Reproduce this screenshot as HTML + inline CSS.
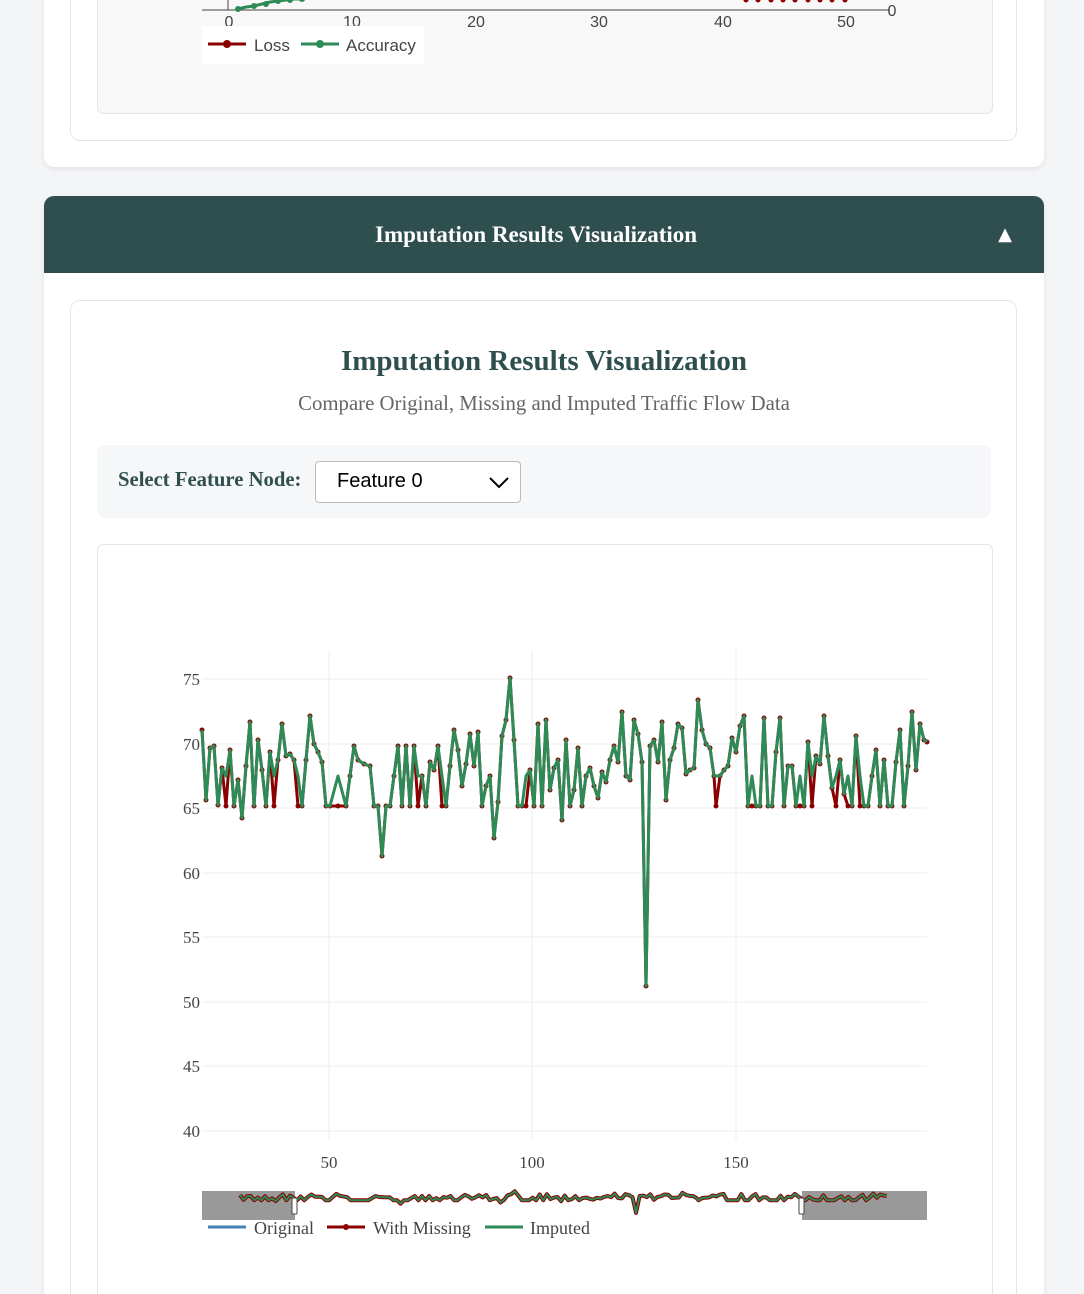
<!DOCTYPE html>
<html style="height:1294px;overflow:hidden"><head><meta charset="utf-8"><style>
*{box-sizing:border-box;margin:0;padding:0}
body{width:1084px;height:1294px;background:#f4f5f7;position:relative;overflow:hidden;font-family:"Liberation Serif",serif}
.abs{position:absolute}
.card{background:#fff;border-radius:10px;box-shadow:0 2px 6px rgba(0,0,0,.08)}
</style></head><body>
<div class="abs card" style="left:44px;top:-20px;width:1000px;height:187px"></div>
<div class="abs" style="left:70px;top:-20px;width:947px;height:161px;border:1px solid #e6e6e6;border-radius:10px;background:#fff"></div>
<div class="abs" style="left:97px;top:-20px;width:896px;height:134px;border:1px solid #e6e6e6;border-radius:6px;background:#f8f8f8"></div>
<svg class="abs" style="left:0;top:0" width="1084" height="70">
<line x1="202" y1="10" x2="885" y2="10" stroke="#444" stroke-width="1"/>
<line x1="228" y1="0" x2="228" y2="10" stroke="#444"/>
<g font-family="Liberation Sans" font-size="16" fill="#444" text-anchor="middle">
<text x="229" y="27">0</text><text x="352" y="27">10</text><text x="476" y="27">20</text><text x="599" y="27">30</text><text x="723" y="27">40</text><text x="846" y="27">50</text>
<text x="892" y="16">0</text></g>
<line x1="885" y1="10" x2="890" y2="10" stroke="#444"/>
<polyline points="238,9 246,7 254,6 262,4 270,2 278,1 286,0 294,-1 302,-1 310,-2 318,-2" fill="none" stroke="#2e8b57" stroke-width="3"/>
<g fill="#2e8b57"><circle cx="238" cy="9" r="3"/><circle cx="254" cy="6" r="3"/><circle cx="266" cy="4" r="3"/><circle cx="278" cy="1" r="3"/><circle cx="290" cy="0" r="3"/><circle cx="302" cy="-1" r="3"/></g>
<g fill="#8b0000"><circle cx="746" cy="0" r="2.5"/><circle cx="758" cy="0" r="2.5"/><circle cx="771" cy="0" r="2.5"/><circle cx="783" cy="0" r="2.5"/><circle cx="795" cy="0" r="2.5"/><circle cx="808" cy="0" r="2.5"/><circle cx="820" cy="0" r="2.5"/><circle cx="832" cy="0" r="2.5"/><circle cx="845" cy="0" r="2.5"/></g>
<rect x="202" y="26" width="222" height="38" fill="#fff"/>
<line x1="208" y1="44" x2="246" y2="44" stroke="#8b0000" stroke-width="3"/><circle cx="227" cy="44" r="4" fill="#8b0000"/>
<line x1="301" y1="44" x2="339" y2="44" stroke="#2e8b57" stroke-width="3"/><circle cx="320" cy="44" r="4" fill="#2e8b57"/>
<g font-family="Liberation Sans" font-size="17" fill="#444"><text x="254" y="51">Loss</text><text x="346" y="51">Accuracy</text></g>
</svg>

<div class="abs card" style="left:44px;top:196px;width:1000px;height:1120px;overflow:hidden">
<div style="height:77px;background:#2f4f4f;color:#fff;font-weight:bold;font-size:23px;line-height:77px;position:relative"><span style="position:absolute;left:331px;top:0">Imputation Results Visualization</span><span style="position:absolute;right:32px;top:0;font-size:18px;font-family:'DejaVu Sans'">▲</span></div>
</div>
<div class="abs" style="left:70px;top:300px;width:947px;height:1100px;border:1px solid #e6e6e6;border-radius:10px;background:#fff"></div>
<div class="abs" style="left:0;top:345px;width:1088px;text-align:center;font-size:29px;font-weight:bold;color:#2f4f4f">Imputation Results Visualization</div>
<div class="abs" style="left:0;top:392px;width:1088px;text-align:center;font-size:20.8px;color:#666">Compare Original, Missing and Imputed Traffic Flow Data</div>
<div class="abs" style="left:97px;top:445px;width:894px;height:73px;background:#f6f7f9;border-radius:8px"></div>
<div class="abs" style="left:118px;top:469px;font-size:20.7px;font-weight:bold;color:#2f4f4f">Select Feature Node:</div>
<div class="abs" style="left:315px;top:461px;width:206px;height:42px;border:1px solid #bbb;border-radius:4px;background:#fff;font-family:'Liberation Sans',sans-serif;font-size:20px;padding:8px 0 0 21px;color:#000">Feature 0
<svg style="position:absolute;right:10px;top:14px" width="22" height="14"><polyline points="2,2 11,11 20,2" fill="none" stroke="#000" stroke-width="2"/></svg></div>
<div class="abs" style="left:97px;top:544px;width:896px;height:800px;border:1px solid #e6e6e6;border-radius:6px;background:#fff"></div>
<svg id="ch" class="abs" style="left:0;top:0" width="1084" height="1294">
<g stroke="#eee" stroke-width="1">
<line x1="202" y1="679" x2="927" y2="679"/><line x1="202" y1="744" x2="927" y2="744"/><line x1="202" y1="808" x2="927" y2="808"/><line x1="202" y1="873" x2="927" y2="873"/><line x1="202" y1="937" x2="927" y2="937"/><line x1="202" y1="1002" x2="927" y2="1002"/><line x1="202" y1="1066" x2="927" y2="1066"/><line x1="202" y1="1131" x2="927" y2="1131"/>
<line x1="329" y1="650" x2="329" y2="1140"/><line x1="532" y1="650" x2="532" y2="1140"/><line x1="736" y1="650" x2="736" y2="1140"/></g>
<g font-family="Liberation Serif" font-size="17" fill="#444" text-anchor="end">
<text x="200" y="685">75</text><text x="200" y="750">70</text><text x="200" y="814">65</text><text x="200" y="879">60</text><text x="200" y="943">55</text><text x="200" y="1008">50</text><text x="200" y="1072">45</text><text x="200" y="1137">40</text></g>
<g font-family="Liberation Serif" font-size="17" fill="#444" text-anchor="middle"><text x="329" y="1168">50</text><text x="532" y="1168">100</text><text x="736" y="1168">150</text></g>
<rect x="202" y="1191" width="725" height="29" fill="#fff"/>
<rect x="202" y="1191" width="93" height="29" fill="#999"/><rect x="802" y="1191" width="125" height="29" fill="#999"/>
<g id="lines"></g>
<rect x="292" y="1198" width="5" height="16" fill="#fff" stroke="#444" stroke-width="1" rx="1"/>
<rect x="799" y="1198" width="5" height="16" fill="#fff" stroke="#444" stroke-width="1" rx="1"/>
<line x1="208" y1="1227" x2="246" y2="1227" stroke="#4682b4" stroke-width="3"/>
<line x1="327" y1="1227" x2="365" y2="1227" stroke="#8b0000" stroke-width="3"/><circle cx="346" cy="1227" r="3" fill="#8b0000"/>
<line x1="485" y1="1227" x2="523" y2="1227" stroke="#2e8b57" stroke-width="3"/>
<g font-family="Liberation Serif" font-size="18" fill="#444"><text x="254" y="1234">Original</text><text x="373" y="1234">With Missing</text><text x="530" y="1234">Imputed</text></g>
</svg>
<script>
var p=[202,730,206,800,210,748,214,746,218,805,222,768,226,806,230,750,234,806,238,780,242,818,246,766,250,722,254,806,258,740,262,770,266,806,270,752,274,806,278,760,282,724,286,756,290,754,294,760,298,806,302,806,306,760,310,716,314,744,318,752,322,762,326,806,330,806,338,806,346,806,350,776,354,746,358,760,364,764,370,766,374,806,378,806,382,856,386,806,390,806,394,776,398,746,402,806,406,746,410,806,414,746,418,806,422,776,426,806,430,762,434,770,438,746,442,806,446,806,450,766,454,730,458,750,462,786,466,764,470,734,474,766,478,732,482,806,486,786,490,776,494,838,498,802,502,736,506,720,510,678,514,740,518,806,522,806,526,806,530,770,534,806,538,724,542,806,546,720,550,790,554,768,558,760,562,820,566,740,570,806,574,790,578,748,582,806,586,776,590,768,594,786,598,798,602,772,606,782,610,760,614,746,618,762,622,712,626,776,630,780,634,720,638,734,642,762,646,986,650,746,654,740,658,762,662,722,666,800,670,760,674,748,678,724,682,728,686,774,690,770,694,768,698,700,702,730,706,744,710,748,714,776,716,806,720,776,724,770,728,766,732,738,736,752,740,726,744,716,748,806,752,806,756,806,760,806,764,718,768,806,772,806,776,752,780,718,784,806,788,766,792,766,796,806,800,806,804,806,808,742,812,806,816,756,820,764,824,716,828,756,832,788,836,806,840,760,844,794,848,806,852,806,856,736,860,806,864,806,868,806,872,776,876,750,880,806,884,760,888,806,892,806,896,762,900,730,904,806,908,766,912,712,916,770,920,724,924,740,927,742];
var ns="http://www.w3.org/2000/svg",g=document.getElementById('lines'),pts=[],g2=[],mini=[];
for(var i=0;i<p.length;i+=2){pts.push(p[i]+','+p[i+1]);var y=p[i+1];if(y==806&&i%6==0)y=776;g2.push(p[i]+','+y);mini.push((240+(p[i]-202)*0.892)+','+(1197+(p[i+1]-760)*0.07));}
function pl(a,c,w){var e=document.createElementNS(ns,'polyline');e.setAttribute('points',a.join(' '));e.setAttribute('fill','none');e.setAttribute('stroke',c);e.setAttribute('stroke-width',w);e.setAttribute('stroke-linejoin','round');g.appendChild(e);}
pl(mini,'#8b0000',4);pl(mini,'#2e8b57',2);
pl(pts,'#8b0000',3);
for(var i=0;i<p.length;i+=2){var c=document.createElementNS(ns,'circle');c.setAttribute('cx',p[i]);c.setAttribute('cy',p[i+1]);c.setAttribute('r',2.5);c.setAttribute('fill','#8b0000');g.appendChild(c);}
pl(g2,'#2e8b57',3);
</script>
</body></html>
